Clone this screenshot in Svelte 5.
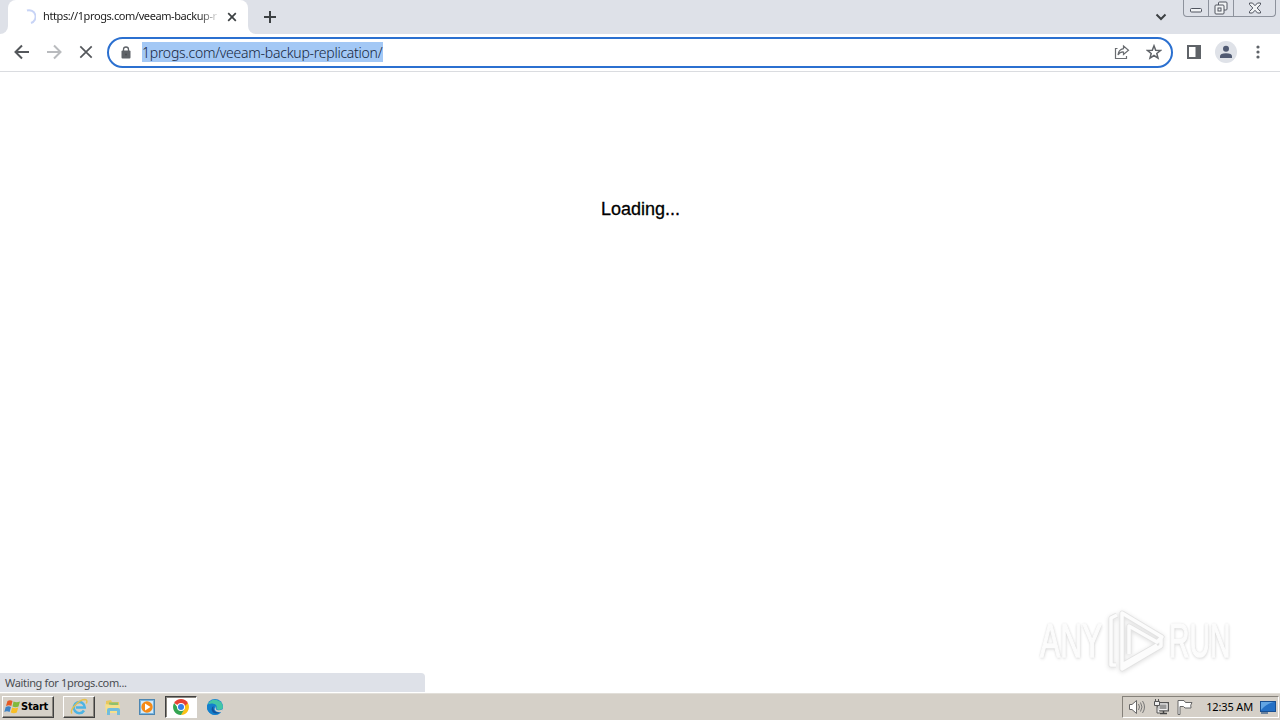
<script>
  let tabTitle = "https://1progs.com/veeam-backup-r";
  let address = "1progs.com/veeam-backup-replication/";
  let clock = "12:35 AM";
</script>

<div class="screen">
  <header class="tabs">
    <div class="tab">
      <svg class="spinner" width="16" height="16" viewBox="0 0 16 16">
        <path d="M7 1.5A6.5 6.5 0 0 1 11 14" />
      </svg>
      <span class="title">{tabTitle}</span>
      <svg class="close" width="10" height="10" viewBox="0 0 10 10">
        <path d="M1.2 1.2l7.6 7.6M8.8 1.2L1.2 8.8" />
      </svg>
    </div>
    <svg class="plus" width="12" height="12" viewBox="0 0 12 12">
      <path d="M6 0v12M0 6h12" />
    </svg>
    <svg class="chevron" width="12" height="8" viewBox="0 0 12 8">
      <path d="M1.5 1.5L6 6l4.500-4.500" />
    </svg>
    <div class="controls">
      <span>
        <svg width="14" height="14" viewBox="0 0 14 14">
          <rect x="1.500" y="7.500" width="11" height="3.500" rx="1" />
        </svg>
      </span>
      <span>
        <svg width="14" height="14" viewBox="0 0 14 14">
          <path d="M4.500 4V2q0-1 1-1H12q1 0 1 1v6q0 1-1 1h-2" />
          <rect x="1" y="4" width="9" height="9" rx="1" />
          <rect x="4" y="7" width="3" height="3" />
        </svg>
      </span>
      <span>
        <svg width="14" height="12" viewBox="0 0 14 12">
          <path
            d="M1.500 1h3L7 3.700 9.500 1h3v1.500L9.200 6l3.300 3.500V11h-3L7 8.300 4.500 11h-3V9.500L4.800 6 1.500 2.500z"
          />
        </svg>
      </span>
    </div>
  </header>

  <nav class="toolbar">
    <svg class="nav" width="16" height="16" viewBox="0 0 16 16">
      <path d="M15 8H2M8 1.500L1.500 8 8 14.500" />
    </svg>
    <svg class="nav off" width="16" height="16" viewBox="0 0 16 16">
      <path d="M1 8h13M8 1.500L14.500 8 8 14.500" />
    </svg>
    <svg class="nav stop" width="16" height="16" viewBox="0 0 16 16">
      <path d="M2.300 2.300l11.400 11.400M13.700 2.300L2.300 13.700" />
    </svg>
    <div class="omnibox">
      <svg class="lock" width="10" height="13" viewBox="0 0 10 13">
        <path d="M2.500 5V3.500a2.500 2.500 0 0 1 5 0V5" fill="none" stroke="#5f6368" stroke-width="1.300" />
        <rect x=".5" y="4.500" width="9" height="8" rx="1" fill="#5f6368" />
        <circle cx="5" cy="8.500" r="1" fill="#4c4f53" />
      </svg>
      <span class="url">{address}</span>
      <svg class="share" width="16" height="16" viewBox="0 0 16 16">
        <path d="M3.500 4.500H1.500v10h11V12" />
        <path d="M9.500 2l5 4.200-5 4.300V8Q6 7.700 4 11q.5-5.500 5.500-6.300z" />
      </svg>
      <svg class="star" width="16" height="16" viewBox="0 0 16 16">
        <path d="M8 1.800l1.700 4.400 4.700.3-3.600 3 1.200 4.600-4-2.600-4 2.600 1.200-4.600-3.600-3 4.700-.3z" />
      </svg>
    </div>
    <svg class="panel" width="14" height="14" viewBox="0 0 14 14">
      <path d="M0 0h14v14H0zM2 2v10h6.500V2z" fill="#5f6368" fill-rule="evenodd" />
    </svg>
    <svg class="profile" width="22" height="22" viewBox="0 0 22 22">
      <circle cx="11" cy="11" r="11" fill="#dfe2e8" />
      <circle cx="11" cy="7.800" r="3" fill="#505a72" />
      <path d="M5 17v-1.800Q5 12.500 11 12.300q6 .2 6 2.900V17z" fill="#505a72" />
    </svg>
    <svg class="menu" width="4" height="14" viewBox="0 0 4 14">
      <circle cx="2" cy="2" r="1.600" />
      <circle cx="2" cy="7" r="1.600" />
      <circle cx="2" cy="12" r="1.600" />
    </svg>
  </nav>

  <main>
    <p class="loading">Loading...</p>
    <div class="watermark">
      <span class="any">ANY</span>
      <svg width="60" height="64" viewBox="0 0 60 64">
        <g fill="none" stroke-linejoin="round">
          <path class="edge" d="M9 56H4V9l6-3M15 45V4l40 24-5 5-28-16v28M15 45v15l39-23v-8M15 56l35-20" />
          <path class="face" d="M9 56H4V9l6-3M15 45V4l40 24-5 5-28-16v28M15 45v15l39-23v-8M15 56l35-20" />
        </g>
      </svg>
      <span>RUN</span>
    </div>
    <div class="status">Waiting for 1progs.com...</div>
  </main>

  <footer class="taskbar">
    <button class="start">
      <svg width="17" height="16" viewBox="0 0 17 16">
        <path d="M3.500 2Q6 .5 8.500 2L7.300 7Q5 5.600 2 7z" fill="#e65a24" />
        <path d="M9.500 2.500q3 1.300 6.500 0l-1.500 5q-3 1.400-6 0z" fill="#80b93c" />
        <path d="M1.700 8q3-1.400 5.300 0l-1.400 5Q3 11.600.3 13z" fill="#3e83c6" />
        <path d="M8.200 8.500q3 1.400 6 0l-1.400 5q-3 1.300-6 0z" fill="#f8be26" />
      </svg>
      <b>Start</b>
    </button>
    <span class="task raised">
      <svg width="18" height="18" viewBox="0 0 18 18">
        <path d="M14 12.500A5.500 5.500 0 1 1 14.800 9.500H6" fill="none" stroke="#4db4e4" stroke-width="2.500" />
        <path d="M2 15.500C-1 12 9 1.500 15 1.500q3 .3 1.300 4" fill="none" stroke="#e6c04d" stroke-width="1.400" />
      </svg>
    </span>
    <span class="task">
      <svg width="18" height="18" viewBox="0 0 18 18">
        <path d="M2 3l5-1 1 2h7v10H2z" fill="#e8c75d" />
        <path d="M5 4.500h9v3H5z" fill="#8fc06d" />
        <path d="M1 6l7 1h8v8H2z" fill="#f5df8c" />
        <path d="M3 17v-5q0-2 2-2h9q2 0 2 2v5h-3v-4H6v4z" fill="#72bddd" />
      </svg>
    </span>
    <span class="task">
      <svg width="16" height="16" viewBox="0 0 16 16">
        <rect x=".5" y=".5" width="15" height="15" fill="#79b5df" stroke="#4d86b1" />
        <rect x="2" y="2" width="12" height="12" fill="#d3eafa" />
        <circle cx="8" cy="8" r="5.700" fill="#f58a16" />
        <path d="M6 4.500L11.500 8 6 11.500z" fill="#fff" />
      </svg>
    </span>
    <span class="task pressed">
      <svg width="16" height="16" viewBox="0 0 16 16">
        <path d="M1.100 4A8 8 0 0 1 14.900 4L8 8z" fill="#e84235" />
        <path d="M14.900 4A8 8 0 0 1 8 16L11.500 9 8 4z" fill="#fbc116" />
        <path d="M1.100 4A8 8 0 0 0 8 16L11.500 10 5 9z" fill="#35a552" />
        <path d="M8 4h6.900L11 8z" fill="#e84235" />
        <circle cx="8" cy="8" r="4" fill="#fff" />
        <circle cx="8" cy="8" r="3" fill="#367fe8" />
      </svg>
    </span>
    <span class="task">
      <svg width="16" height="16" viewBox="0 0 16 16">
        <circle cx="8" cy="8" r="8" fill="#1681d2" />
        <path d="M1 5A8 8 0 0 1 16 8q-.5 3-4 3-3 0-2.500-2Q11 4 1 5z" fill="#43c6a6" />
        <path d="M.2 6Q6 3 8.700 6 6 7 6.500 10q1 4 7 3.500A8 8 0 0 1 .2 6z" fill="#1380cc" />
        <path d="M6.300 7Q3 10 6 13.500q3 2 7.500 0-6 .5-7-3.500z" fill="#14539c" />
        <path d="M9 7q-1 3 1 4 3 1 6-1l-1 3q-6 1-7.500-3z" fill="#d5d0c8" />
      </svg>
    </span>

    <div class="tray">
      <svg width="18" height="16" viewBox="0 0 18 16">
        <path d="M1.500 5.500H4l4.500-4v13l-4.500-4H1.500z" fill="#fff" stroke="#666" />
        <path d="M10.500 5q2 3 0 6M12.500 3.500q3 4.500 0 9M14.500 2q4 6 0 12" fill="none" stroke="#777" />
      </svg>
      <svg width="17" height="16" viewBox="0 0 17 16">
        <rect x="4.500" y="3.500" width="11" height="8.500" fill="#aaa" stroke="#555" />
        <path d="M6 5h8v5.500H6z" fill="#999" stroke="#eee" />
        <path d="M7 14.500h7M10.500 12v2" stroke="#444" stroke-width="1.500" />
        <path d="M1.500 2.500h5v4h-5zM2.500 0v2M5.500 0v2M4 7v7h3" fill="#eee" stroke="#555" />
      </svg>
      <svg width="17" height="16" viewBox="0 0 17 16">
        <path d="M1 15.500V1.500h6l1.500 2h6.500q-2 2.500-1 5.500h-6L6.500 7.500H3v8z" fill="#fff" stroke="#666" />
      </svg>
      <span class="clock">{clock}</span>
      <svg class="desktop" width="16" height="13" viewBox="0 0 16 13">
        <rect x=".5" y=".5" width="15" height="10" fill="#2470c5" stroke="#184f91" />
        <path d="M1 1h13Q6 3 1 9z" fill="#62a5e3" />
        <path d="M1 12h7" stroke="#46698f" stroke-width="1.500" />
      </svg>
    </div>
  </footer>
</div>

<style>
  :global(body) {
    margin: 0;
    overflow: hidden;
  }
  .screen {
    display: flex;
    flex-direction: column;
    width: 1280px;
    height: 720px;
    background: #fff;
    font-family: "Noto Sans", sans-serif;
    font-size: 11px;
    color: #222;
  }
  svg {
    display: block;
    flex-shrink: 0;
  }
  .tabs {
    display: flex;
    height: 34px;
    background: linear-gradient(#fff, #fff) 0 100% / 256px 8px no-repeat #dee1e8;
  }
  /* the strip's lower corners curve into the active tab */
  .tabs::before {
    content: "";
    width: 8px;
    background: #dee1e8;
    border-bottom-right-radius: 8px;
  }
  .tab {
    display: flex;
    align-items: center;
    box-sizing: border-box;
    width: 240px;
    padding-left: 12px;
    border-radius: 8px 8px 0 0;
    background: #fff;
  }
  .tab + .plus {
    box-sizing: content-box;
    padding: 11px 0 11px 16px;
    background: #dee1e8;
    border-bottom-left-radius: 8px;
  }
  .spinner {
    margin-right: 7px;
    fill: none;
    stroke: #c8d4f6;
    stroke-width: 2;
  }
  .title {
    width: 176px;
    overflow: hidden;
    white-space: nowrap;
    font-size: 11px;
    line-height: 16px;
    margin-top: -2px;
    letter-spacing: -0.4px;
    -webkit-mask-image: linear-gradient(to right, #000 156px, transparent 177px);
    mask-image: linear-gradient(to right, #000 156px, transparent 177px);
  }
  .close {
    margin-left: 8px;
    stroke: #3c4043;
    stroke-width: 1.7;
  }
  .plus {
    stroke: #3c4043;
    stroke-width: 2;
  }
  .chevron {
    margin: 13px 16px 0 auto;
    fill: none;
    stroke: #3c4043;
    stroke-width: 2;
  }
  .controls {
    display: flex;
    box-sizing: border-box;
    width: 93px;
    height: 17px;
    margin-right: 4px;
    border: 1px solid #8d929c;
    border-top: 0;
    border-radius: 0 0 4px 4px;
  }
  .controls span {
    display: flex;
    align-items: center;
    justify-content: center;
    width: 24px;
  }
  .controls span + span {
    border-left: 1px solid #8d929c;
  }
  .controls span:last-child {
    flex: 1;
  }
  .controls svg {
    fill: #f1f3f5;
    stroke: #50545f;
  }
  .toolbar {
    display: flex;
    align-items: center;
    box-sizing: border-box;
    height: 38px;
    padding: 0 20px 1px 14px;
    border-bottom: 1px solid #dadce0;
  }
  .nav {
    margin-right: 16px;
    fill: none;
    stroke: #54575b;
    stroke-width: 2;
  }
  .off {
    stroke: #b9bbbe;
  }
  .stop {
    margin-right: 13px;
    stroke-width: 1.7;
  }
  .omnibox {
    display: flex;
    align-items: center;
    box-sizing: border-box;
    width: 1066px;
    height: 31px;
    margin-right: 14px;
    padding: 0 9px 0 12px;
    border: 2px solid #2b70d0;
    border-radius: 16px;
  }
  .url {
    width: 241px;
    margin-left: 11px;
    height: 20px;
    line-height: 21px;
    white-space: nowrap;
    background: #a3c8f5;
    color: #16263d;
    font-size: 14px;
    font-weight: 300;
    letter-spacing: -0.25px;
  }
  .share {
    margin-left: auto;
    margin-right: 16px;
    fill: none;
    stroke: #6a6d71;
    stroke-width: 1.2;
  }
  .star {
    fill: none;
    stroke: #5f6368;
    stroke-width: 1.5;
  }
  .profile {
    margin: 0 19px 0 14px;
  }
  .menu {
    margin-left: auto;
    fill: #5f6368;
  }
  main {
    position: relative;
    flex: 1;
  }
  .loading {
    margin: 126px 0 0 1px;
    text-align: center;
    font-family: "Liberation Sans", Arial, sans-serif;
    font-size: 18px;
    line-height: 22px;
    color: #000;
    -webkit-text-stroke: 0.3px #000;
  }
  .watermark {
    position: absolute;
    right: 46px;
    bottom: 20px;
    display: flex;
    align-items: center;
    width: 194px;
    height: 64px;
    font-family: "Liberation Sans", Arial, sans-serif;
    color: #fcfcfc;
  }
  .watermark span {
    width: 63px;
    font-size: 48px;
    line-height: 64px;
    -webkit-text-stroke: 1.5px #fcfcfc;
    transform: scaleX(0.59);
    transform-origin: left;
    text-shadow:
      0 0 3px #c5c5c5,
      1px 2px 4px #ddd;
  }
  .watermark .any {
    width: 67px;
    transform: scaleX(0.63);
  }
  .watermark svg {
    margin-right: 2px;
    filter: drop-shadow(0 1px 2px #ddd);
  }
  .edge {
    stroke: #e3e3e3;
    stroke-width: 5;
  }
  .face {
    stroke: #fcfcfc;
    stroke-width: 3.5;
  }
  .status {
    position: absolute;
    left: 0;
    bottom: 1px;
    box-sizing: border-box;
    width: 425px;
    height: 19px;
    padding-left: 5px;
    border-radius: 0 4px 0 0;
    background: #dee1e8;
    line-height: 20px;
    color: #4a4c50;
    letter-spacing: -0.34px;
  }
  .taskbar {
    display: flex;
    align-items: center;
    box-sizing: border-box;
    height: 27px;
    padding: 1px 1px 2px 2px;
    background: #d5d0c8;
    border-top: 1px solid #e2dfd9;
  }
  .start {
    display: flex;
    align-items: center;
    box-sizing: border-box;
    width: 52px;
    height: 22px;
    margin-right: 9px;
    padding: 0 0 0 1px;
    border: 1px solid;
    border-color: #fff #404040 #404040 #fff;
    box-shadow: inset -1px -1px #89857e;
    background: #d5d0c8;
    color: #000;
    font: 11px "DejaVu Sans Condensed", "DejaVu Sans", sans-serif;
    letter-spacing: -0.2px;
  }
  .task {
    display: flex;
    align-items: center;
    justify-content: center;
    box-sizing: border-box;
    width: 32px;
    height: 22px;
    margin-right: 2px;
    border: 1px solid transparent;
  }
  .raised {
    border-color: #fff #404040 #404040 #fff;
    box-shadow: inset -1px -1px #89857e;
  }
  .pressed {
    border-color: #404040 #fff #fff #404040;
    box-shadow: inset 1px 1px #89857e;
    background: #fff;
  }
  .tray {
    display: flex;
    align-items: center;
    box-sizing: border-box;
    width: 157px;
    height: 22px;
    margin-left: auto;
    padding: 0 2px 0 5px;
    gap: 7px;
    border: 1px solid;
    border-color: #85817a #fff #fff #85817a;
  }
  .clock {
    margin-left: auto;
    white-space: nowrap;
    color: #000;
    letter-spacing: -0.15px;
  }
  .desktop {
    margin-top: 2px;
  }
</style>
